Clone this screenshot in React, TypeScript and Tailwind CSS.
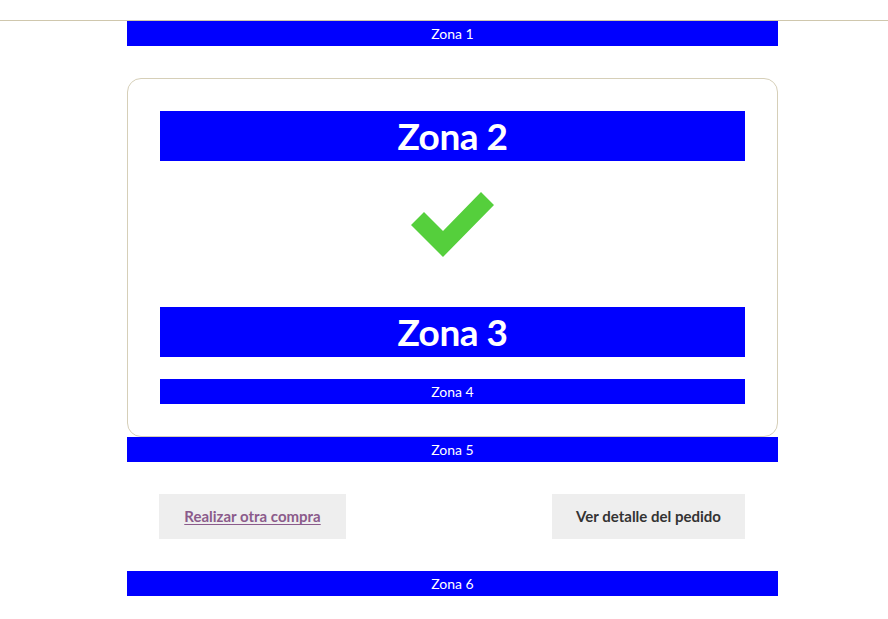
import React from "react";

const Bar = ({ children, big }: { children: React.ReactNode; big?: boolean }) =>
  big ? (
    <div className="h-[50px] bg-[#0000ff] text-white flex items-center justify-center text-[37px] font-bold tracking-[-0.5px]">
      {children}
    </div>
  ) : (
    <div className="h-[25px] bg-[#0000ff] text-white flex items-center justify-center text-[14px]">
      {children}
    </div>
  );

export default function App() {
  return (
    <div className="min-h-[619px] bg-white" style={{ fontFamily: "Lato, 'Open Sans', sans-serif" }}>
      <div className="h-[21px] border-b border-[#cfc7ad]" />
      <div className="ml-[127px] w-[651px]">
        <Bar>Zona 1</Bar>
        <div className="mt-[32px] border border-[#d6cfb8] rounded-[14px] px-[32px] pt-[32px] pb-[32px]">
          <Bar big>Zona 2</Bar>
          <div className="h-[146px] relative">
            <svg width="888" height="100" className="absolute left-[-160px] top-0" viewBox="0 161 888 100">
              <polygon points="411,225 424,212 443,231 481,192 494,205 443,257" fill="#55cf3c" />
            </svg>
          </div>
          <Bar big>Zona 3</Bar>
          <div className="mt-[22px]">
            <Bar>Zona 4</Bar>
          </div>
        </div>
        <Bar>Zona 5</Bar>
        <div className="flex justify-between pl-[32px] pr-[33px] mt-[32px]">
          <button className="w-[187px] h-[45px] bg-[#eeeeee] text-[15px] font-bold text-[#8b5b8b] underline underline-offset-2">
            Realizar otra compra
          </button>
          <button className="w-[193px] h-[45px] bg-[#eeeeee] text-[15px] font-bold text-[#333333]">
            Ver detalle del pedido
          </button>
        </div>
        <div className="mt-[32px]">
          <Bar>Zona 6</Bar>
        </div>
      </div>
    </div>
  );
}
